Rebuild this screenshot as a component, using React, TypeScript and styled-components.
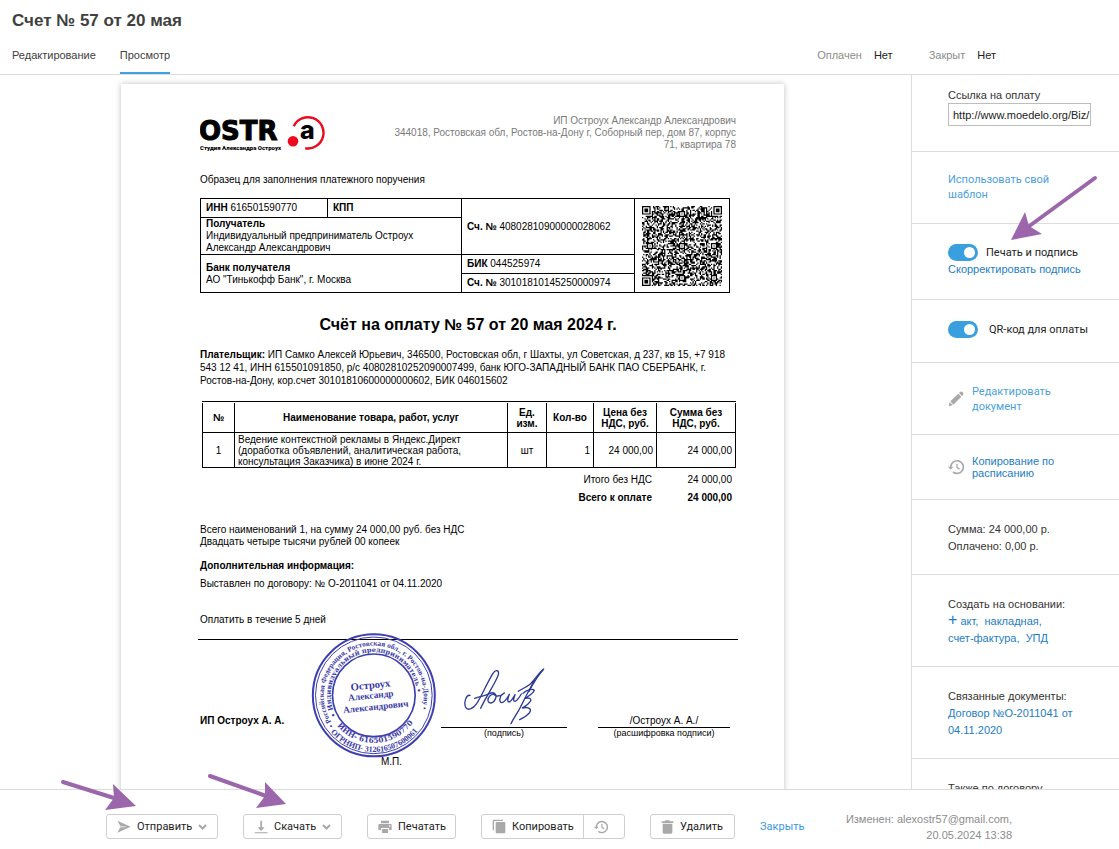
import React from "react";
import styled, { createGlobalStyle, css } from "styled-components";

const ARIAL = `"Liberation Sans", Arial, sans-serif`;
const ROBOTO = `Roboto, "Liberation Sans", sans-serif`;
const LINE = "#dcdcdc";
const ARROW = "#9b66ac";

const GlobalStyle = createGlobalStyle`
  *, *::before, *::after { box-sizing: border-box; }
  body {
    margin: 0;
    background: #fff;
    color: #333;
    font: 11px/17px ${ARIAL};
  }
  a { text-decoration: none; }
`;

/* ---------- page frame ---------- */

const Page = styled.div`
  display: flex;
  flex-direction: column;
  height: 100vh;
  overflow: hidden;
`;

const Header = styled.header`
  flex: none;
  border-bottom: 1px solid ${LINE};
`;

const PageTitle = styled.h1`
  margin: 0;
  padding: 10px 12px 0;
  font-size: 17px;
  line-height: 22px;
  color: #404040;
`;

const HeaderRow = styled.div`
  display: flex;
  justify-content: space-between;
  padding: 14px 123px 0 12px;
`;

const Tabs = styled.nav`
  display: flex;
  gap: 24px;
`;

const Tab = styled.a<{ $active?: boolean }>`
  height: 28px;
  line-height: 18px;
  color: #404040;
  border-bottom: 2px solid ${(p) => (p.$active ? "#3ea2df" : "transparent")};
`;

const Statuses = styled.dl`
  display: flex;
  gap: 36px;
  margin: 0;
`;

const Status = styled.div`
  display: flex;
  gap: 12px;
  line-height: 18px;
  dt { color: #8c8c8c; }
  dd { margin: 0; color: #222; }
`;

const Main = styled.main`
  display: flex;
  flex: 1;
  min-height: 0;
`;

const Preview = styled.section`
  flex: 1;
  min-width: 0;
  overflow: hidden;
  padding: 9px 6px 0 0;
`;

/* ---------- printed document ---------- */

const Paper = styled.article`
  width: 663px;
  margin: 0 auto;
  padding: 31px 48px 60px 79px;
  background: #fff;
  box-shadow: 0 0 6px rgba(0, 0, 0, 0.25);
  color: #000;
  font-size: 10px;
  line-height: 12px;
`;

const PaperHead = styled.div`
  display: flex;
  justify-content: space-between;
  align-items: flex-start;
  height: 36px;
  margin-bottom: 23px;
`;

const Address = styled.address`
  width: 350px;
  text-align: right;
  font-style: normal;
  color: #7a7a7a;
`;

const Para = styled.p<{ $top?: number; $bold?: boolean }>`
  margin: ${(p) => p.$top ?? 0}px 0 0;
  font-weight: ${(p) => (p.$bold ? 700 : 400)};
`;

const Payer = styled(Para)`
  line-height: 13px;
`;

const DocTitle = styled.h2`
  margin: 22px 0 0;
  text-align: center;
  font-size: 16px;
  line-height: 20px;
`;

const BankTable = styled.table`
  width: 530px;
  margin-top: 12px;
  border-collapse: collapse;
  table-layout: fixed;
  td {
    height: 19px;
    padding: 0 5px;
    border: 1px solid #000;
    vertical-align: middle;
  }
`;

const QrCell = styled.td`
  svg { display: block; margin: 0 auto; }
`;

const ItemsFrame = styled.div`
  margin: 14px 0 0 2px;
  padding-top: 1px;
  border-top: 1px solid #000;
`;

const ItemsTable = styled.table`
  width: 100%;
  border-spacing: 0;
  table-layout: fixed;
  line-height: 11px;
  thead th, tbody td {
    border-left: 1px solid #000;
    border-bottom: 1px solid #000;
  }
  thead th:last-child, tbody td:last-child { border-right: 1px solid #000; }
  th { height: 30px; padding: 0 2px; }
  tbody td { height: 35px; padding: 0 3px; }
  tfoot td { height: 18px; padding: 0 4px; text-align: right; }
  tfoot tr:first-child td { height: 20px; padding-top: 2px; }
  tfoot tr:last-child td { font-weight: 700; }
`;

const Cell = styled.td<{ $align: "left" | "center" | "right" }>`
  text-align: ${(p) => p.$align};
`;

const Rule = styled.hr`
  height: 1px;
  margin: 13px -2px 0;
  border: 0;
  background: #000;
`;

const SignRow = styled.div`
  position: relative;
  display: grid;
  grid-template-columns: 241px 126px 132px;
  align-items: end;
  padding-top: 25px;
  & > :last-child { margin-left: 31px; width: 132px; }
`;

const SignName = styled.div`
  padding-bottom: 11px;
  font-weight: 700;
`;

const SignField = styled.div`
  text-align: center;
`;

const SignLine = styled.div`
  border-bottom: 1px solid #000;
  svg { display: block; margin-left: 21px; }
`;

const SignCaption = styled.div`
  font-size: 9px;
  line-height: 10px;
`;

const Stamp = styled.svg`
  position: absolute;
  left: 110px;
  top: -7px;
`;

const SealMark = styled.p`
  margin: 18px 0 0 181px;
`;

/* ---------- sidebar ---------- */

const Sidebar = styled.aside`
  flex: none;
  width: 208px;
  overflow: hidden;
  border-left: 1px solid ${LINE};
`;

const Section = styled.section<{ $top?: number; $bottom?: number }>`
  position: relative;
  padding: ${(p) => p.$top ?? 20}px 20px ${(p) => p.$bottom ?? 20}px 36px;
  border-bottom: 1px solid ${LINE};
`;

const LinkField = styled.label`
  display: block;
  line-height: 15px;
  input {
    display: block;
    width: 143px;
    height: 23px;
    padding: 0 0 0 4px;
    border: 1px solid #bdbdbd;
    font: 11px/17px ${ARIAL};
    color: #222;
  }
`;

const SideLink = styled.a`
  color: #1d7dc2;
`;

const LightLink = styled.a`
  display: block;
  width: 110px;
  font: 11px/15px ${ROBOTO};
  color: #4a9fdc;
`;

const IconLink = styled.div<{ $tight?: boolean }>`
  display: flex;
  align-items: center;
  gap: 8px;
  svg { flex: none; }
  ${(p) => p.$tight && css`line-height: 12px;`}
`;

const Switch = styled.label<{ $gap: number }>`
  display: flex;
  align-items: center;
  gap: ${(p) => p.$gap}px;
  height: 17px;
  font-family: ${ROBOTO};
  color: #222;
  white-space: nowrap;
  input {
    appearance: none;
    flex: none;
    display: flex;
    align-items: center;
    width: 30px;
    height: 17px;
    margin: 0;
    padding: 0 3px;
    border-radius: 9px;
    background: #c4c4c4;
  }
  input::before {
    content: "";
    width: 11px;
    height: 11px;
    border-radius: 50%;
    background: #fff;
  }
  input:checked {
    justify-content: flex-end;
    background: #3a9fdf;
  }
`;

const Plus = styled.span`
  font-size: 16px;
  line-height: 12px;
`;

/* ---------- footer ---------- */

const Footer = styled.footer`
  flex: none;
  display: flex;
  align-items: flex-start;
  gap: 25px;
  height: 60px;
  padding: 24px 107px 0 106px;
  border-top: 1px solid ${LINE};
  background: #fff;
`;

const Anchor = styled.div`
  position: relative;
`;

const ButtonGroup = styled.div`
  display: flex;
  button + button {
    margin-left: -1px;
    border-radius: 0 3px 3px 0;
  }
  button:first-child { border-radius: 3px 0 0 3px; }
`;

const Button = styled.button<{ $width: number }>`
  display: flex;
  align-items: center;
  justify-content: flex-start;
  gap: 6px;
  width: ${(p) => p.$width}px;
  height: 25px;
  padding: 0 10px;
  border: 1px solid #cfcfcf;
  border-radius: 3px;
  background: #fff;
  font: 11px/17px ${ROBOTO};
  color: #222;
  white-space: nowrap;
  svg { flex: none; }
`;

const CloseLink = styled.a`
  font: 11px/25px ${ROBOTO};
  color: #3b97dd;
`;

const Changed = styled.div`
  margin: -3px 0 0 auto;
  text-align: right;
  line-height: 16px;
  color: #8c8c8c;
`;

const Pointer = styled.svg<{ $left: number; $top: number }>`
  position: absolute;
  left: ${(p) => p.$left}px;
  top: ${(p) => p.$top}px;
  overflow: visible;
  pointer-events: none;
  z-index: 2;
`;

/* ---------- drawings ---------- */

const Logo = () => (
  <svg width="126" height="37" viewBox="0 0 126 37" aria-label="OSTR.a">
    <text x="-1" y="25" fontFamily="DejaVu Sans" fontWeight="700" fontSize="26" stroke="#000" strokeWidth="1">OSTR</text>
    <text x="0" y="35" fontFamily="Roboto" fontWeight="900" fontSize="6">Студия Александра Остроух</text>
    <path d="M93.8 11.2A15.6 15.6 0 1 1 105.2 33.2" fill="none" stroke="#ec0a1e" strokeWidth="2.4" />
    <circle cx="93" cy="26.300" r="5.3" fill="#ec0a1e" />
    <text x="100" y="24" fontFamily="Inter" fontWeight="800" fontSize="25">a</text>
  </svg>
);

const QR_SIZE = 65;

function qrPath(): string {
  let seed = 20240520;
  const rnd = () => {
    seed = (seed * 1103515245 + 12345) % 2147483648;
    return seed / 2147483648;
  };
  const grid: boolean[][] = [];
  for (let y = 0; y < QR_SIZE; y++) {
    grid.push([]);
    for (let x = 0; x < QR_SIZE; x++) grid[y].push(rnd() > 0.48);
  }
  const put = (x: number, y: number, v: boolean) => {
    if (x >= 0 && y >= 0 && x < QR_SIZE && y < QR_SIZE) grid[y][x] = v;
  };
  const square = (cx: number, cy: number, r: number, light: number[]) => {
    for (let dy = -r; dy <= r; dy++)
      for (let dx = -r; dx <= r; dx++)
        put(cx + dx, cy + dy, !light.includes(Math.max(Math.abs(dx), Math.abs(dy))));
  };
  [6, 32, 58].forEach((x) => [6, 32, 58].forEach((y) => square(x, y, 2, [1])));
  [[3, 3], [61, 3], [3, 61]].forEach(([x, y]) => square(x, y, 4, [2, 4]));
  let d = "";
  grid.forEach((row, y) => row.forEach((on, x) => { if (on) d += `M${x} ${y}h1v1h-1z`; }));
  return d;
}

const QR_PATH = qrPath();

const QrCode = () => (
  <svg width="80" height="80" viewBox="0 0 65 65" aria-label="QR-код">
    <path d={QR_PATH} />
  </svg>
);

const StampDrawing = () => (
  <Stamp width="127" height="125" viewBox="30 25 380 375">
    <defs>
      <path id="ringOuter" d="M101 303A150 150 0 1 1 340 304" />
      <path id="ringInner" d="M108 274A129 129 0 1 1 342 255" />
      <path id="footOuter" d="M84 313A170 170 0 0 0 384 260" />
      <path id="footInner" d="M101 290A144 144 0 0 0 363 236" />
    </defs>
    <g fill="none" stroke="#3f3fae">
      <circle cx="221" cy="212" r="183" strokeWidth="6" />
      <circle cx="221" cy="212" r="175" strokeWidth="3" />
      <circle cx="221" cy="212" r="124" strokeWidth="5" />
    </g>
    <g fill="#3a3aa6" fontFamily="Liberation Serif" fontWeight="700">
      <text fontSize="22"><textPath href="#ringOuter">• Российская Федерация, Ростовская обл., г. Ростов-на-Дону •</textPath></text>
      <text fontSize="24"><textPath href="#footOuter" startOffset="12">ОГРНИП- 312616507600061</textPath></text>
      <text fontSize="20" fontFamily="DejaVu Serif"><textPath href="#ringInner">• Индивидуальный предприниматель •</textPath></text>
      <text fontSize="22" fontFamily="DejaVu Serif"><textPath href="#footInner" startOffset="16">ИНН- 616501590770</textPath></text>
      <g textAnchor="middle" transform="rotate(-6 221 212)">
        <text x="214" y="191" fontSize="32">Остроух</text>
        <text x="212" y="221" fontSize="28">Александр</text>
        <text x="223" y="256" fontSize="28">Александрович</text>
      </g>
    </g>
  </Stamp>
);

const Signature = () => (
  <svg width="85" height="62" viewBox="95 105 255 186" fill="none" stroke="#2d3a94" strokeWidth="4" strokeLinecap="round" strokeLinejoin="round">
    <path d="M119 196C108 194 100 215 105 230C111 244 128 237 139 221C154 198 172 155 188 130C196 118 208 120 204 134C196 160 166 200 151 235" />
    <path d="M133 205C148 199 165 198 178 191C190 184 200 193 196 205C191 220 176 224 173 212C172 200 184 190 192 194C204 204 214 196 222 189C208 196 204 216 214 218C224 218 232 202 237 193C232 206 230 215 236 216C243 215 250 200 254 194C249 207 248 214 254 214C262 212 268 200 273 192" />
    <path d="M340 117C325 128 318 145 300 162C288 172 272 178 264 184M313 150C296 180 280 212 270 232C262 250 250 262 242 281" />
    <path d="M278 190C292 178 308 176 312 181C308 192 292 200 284 205C298 202 305 206 300 214C292 226 282 230 276 234C290 230 302 234 300 243C296 256 280 262 268 269" />
    <path d="M339 119C324 136 312 154 296 184" />
  </svg>
);

const SendIcon = () => (
  <svg width="14" height="13" viewBox="0 0 42 39" fill="#a9a9a9"><path d="M1 2L41 20L1 38L10 22L28 20L10 18Z" /><path d="M9 17L27 19V21L9 23Z" fill="#d8d8d8" /></svg>
);
const DownloadIcon = () => (
  <svg width="14" height="14" viewBox="0 0 42 42" fill="#a9a9a9"><path d="M19 2h5v20h8L21.500 33L11 22h8zM2 37h39v3H2z" /></svg>
);
const PrintIcon = () => (
  <svg width="14" height="14" viewBox="0 0 42 42" fill="#a9a9a9"><path d="M9 2h24v8H9zM4 12h34a3 3 0 0 1 3 3v15h-8v-6H9v6H1V15a3 3 0 0 1 3-3zm29 4v4h4v-4zM12 27h18v12H12z" /></svg>
);
const CopyIcon = () => (
  <svg width="14" height="15" viewBox="0 0 42 45" fill="#a9a9a9"><rect x="11" y="9" width="29" height="34" rx="3" /><path d="M2 34V6a4 4 0 0 1 4-4h27v4H8a2 2 0 0 0-2 2v26z" /></svg>
);
const TrashIcon = () => (
  <svg width="13" height="14" viewBox="0 0 39 42" fill="#a9a9a9"><path d="M13 1h12l2 3h10v5H2V4h9zM5 11h29v26a4 4 0 0 1-4 4H9a4 4 0 0 1-4-4z" /></svg>
);
const HistoryIcon = ({ size = 14 }: { size?: number }) => (
  <svg width={size} height={size} viewBox="0 0 48 48" fill="none" stroke="#a9a9a9" strokeWidth="5">
    <path d="M8 24A19 19 0 1 1 15 39" /><path d="M27 14v11l8 6" strokeWidth="4" /><path d="M0 23h16l-8 9z" fill="#a9a9a9" stroke="none" />
  </svg>
);
const PencilIcon = () => (
  <svg width="16" height="16" viewBox="0 0 48 48" fill="#a9a9a9"><path d="M2 46l3-13 9 10zM7 31L31 8l9 9-24 24zM33 6l3-3a5 5 0 0 1 7 0l2 2a5 5 0 0 1 0 7l-3 3z" /></svg>
);
const Chevron = () => (
  <svg width="9" height="6" viewBox="0 0 9 6" fill="none" stroke="#a9a9a9" strokeWidth="2"><path d="M1 1l3.500 3.500L8 1" /></svg>
);

/* ---------- app ---------- */

export default function App() {
  return (
    <Page>
      <GlobalStyle />
      <Header>
        <PageTitle>Счет № 57 от 20 мая</PageTitle>
        <HeaderRow>
          <Tabs>
            <Tab href="#edit">Редактирование</Tab>
            <Tab href="#view" $active>Просмотр</Tab>
          </Tabs>
          <Statuses>
            <Status><dt>Оплачен</dt><dd>Нет</dd></Status>
            <Status><dt>Закрыт</dt><dd>Нет</dd></Status>
          </Statuses>
        </HeaderRow>
      </Header>

      <Main>
        <Preview>
          <Paper>
            <PaperHead>
              <Logo />
              <Address>
                ИП Остроух Александр Александрович<br />
                344018, Ростовская обл, Ростов-на-Дону г, Соборный пер, дом 87, корпус<br />
                71, квартира 78
              </Address>
            </PaperHead>
            <Para>Образец для заполнения платежного поручения</Para>
            <BankTable>
              <colgroup>
                <col style={{ width: 127 }} /><col style={{ width: 134 }} /><col style={{ width: 173 }} /><col />
              </colgroup>
              <tbody>
                <tr>
                  <td><b>ИНН</b> 616501590770</td>
                  <td><b>КПП</b></td>
                  <td rowSpan={2}><b>Сч. №</b> 40802810900000028062</td>
                  <QrCell rowSpan={4}><QrCode /></QrCell>
                </tr>
                <tr>
                  <td colSpan={2}><b>Получатель</b><br />Индивидуальный предприниматель Остроух<br />Александр Александрович</td>
                </tr>
                <tr>
                  <td colSpan={2} rowSpan={2}><b>Банк получателя</b><br />АО "Тинькофф Банк", г. Москва</td>
                  <td><b>БИК</b> 044525974</td>
                </tr>
                <tr><td><b>Сч. №</b> 30101810145250000974</td></tr>
              </tbody>
            </BankTable>

            <DocTitle>Счёт на оплату № 57 от 20 мая 2024 г.</DocTitle>
            <Payer $top={13}>
              <b>Плательщик:</b> ИП Самко Алексей Юрьевич, 346500, Ростовская обл, г Шахты, ул Советская, д 237, кв 15, +7 918<br />
              543 12 41, ИНН 615501091850, р/с 40802810252090007499, банк ЮГО-ЗАПАДНЫЙ БАНК ПАО СБЕРБАНК, г.<br />
              Ростов-на-Дону, кор.счет 30101810600000000602, БИК 046015602
            </Payer>

            <ItemsFrame>
              <ItemsTable>
                <colgroup>
                  <col style={{ width: 32 }} /><col /><col style={{ width: 39 }} /><col style={{ width: 47 }} /><col style={{ width: 63 }} /><col style={{ width: 80 }} />
                </colgroup>
                <thead>
                  <tr>
                    <th>№</th><th>Наименование товара, работ, услуг</th><th>Ед.<br />изм.</th><th>Кол-во</th>
                    <th>Цена без<br />НДС, руб.</th><th>Сумма без<br />НДС, руб.</th>
                  </tr>
                </thead>
                <tbody>
                  <tr>
                    <Cell $align="center">1</Cell>
                    <Cell $align="left">Ведение контекстной рекламы в Яндекс.Директ<br />(доработка объявлений, аналитическая работа,<br />консультация Заказчика) в июне 2024 г.</Cell>
                    <Cell $align="center">шт</Cell>
                    <Cell $align="right">1</Cell>
                    <Cell $align="right">24 000,00</Cell>
                    <Cell $align="right">24 000,00</Cell>
                  </tr>
                </tbody>
                <tfoot>
                  <tr><td colSpan={5}>Итого без НДС</td><td>24 000,00</td></tr>
                  <tr><td colSpan={5}>Всего к оплате</td><td>24 000,00</td></tr>
                </tfoot>
              </ItemsTable>
            </ItemsFrame>

            <Para $top={18}>Всего наименований 1, на сумму 24 000,00 руб. без НДС<br />Двадцать четыре тысячи рублей 00 копеек</Para>
            <Para $top={12} $bold>Дополнительная информация:</Para>
            <Para $top={6}>Выставлен по договору: № О-2011041 от 04.11.2020</Para>
            <Para $top={24}>Оплатить в течение 5 дней</Para>
            <Rule />
            <SignRow>
              <SignName>ИП Остроух А. А.</SignName>
              <StampDrawing />
              <SignField>
                <SignLine><Signature /></SignLine>
                <SignCaption>(подпись)</SignCaption>
              </SignField>
              <SignField>
                <SignLine>/Остроух А. А./</SignLine>
                <SignCaption>(расшифровка подписи)</SignCaption>
              </SignField>
            </SignRow>
            <SealMark>М.П.</SealMark>
          </Paper>
        </Preview>

        <Sidebar>
          <Section $top={13} $bottom={25}>
            <LinkField>Ссылка на оплату<input type="text" readOnly value="http://www.moedelo.org/Biz/" /></LinkField>
          </Section>
          <Section $bottom={21}>
            <LightLink href="#template">Использовать свой шаблон</LightLink>
          </Section>
          <Section $bottom={21}>
            <Switch $gap={8}><input type="checkbox" defaultChecked />Печать и подпись</Switch>
            <SideLink href="#adjust">Скорректировать подпись</SideLink>
            <Pointer $left={99} $top={-48} width="86" height="66" viewBox="1011 176 86 66">
              <path d="M1095 178L1028 227" stroke={ARROW} strokeWidth="4" strokeLinecap="round" />
              <path d="M1011 240L1025 212L1029 226L1042 234Z" fill={ARROW} />
            </Pointer>
          </Section>
          <Section $top={21} $bottom={24}>
            <Switch $gap={11}><input type="checkbox" defaultChecked />QR-код для оплаты</Switch>
          </Section>
          <Section $top={21}>
            <IconLink><PencilIcon /><LightLink href="#document">Редактировать документ</LightLink></IconLink>
          </Section>
          <Section>
            <IconLink $tight><HistoryIcon size={16} /><SideLink href="#schedule">Копирование по расписанию</SideLink></IconLink>
          </Section>
          <Section $top={21} $bottom={19}>Сумма: 24 000,00 р.<br />Оплачено: 0,00 р.</Section>
          <Section $top={21} $bottom={19}>
            Создать на основании:<br />
            <SideLink href="#act"><Plus>+</Plus> акт,</SideLink>&nbsp; <SideLink href="#waybill">накладная,</SideLink><br />
            <SideLink href="#invoice">счет-фактура,</SideLink>&nbsp; <SideLink href="#upd">УПД</SideLink>
          </Section>
          <Section $top={21} $bottom={19}>
            Связанные документы:<br />
            <SideLink href="#contract">Договор №О-2011041 от<br />04.11.2020</SideLink>
          </Section>
          <Section $top={21}>Также по договору</Section>
        </Sidebar>
      </Main>

      <Footer>
        <Anchor>
          <Button $width={112}><SendIcon />Отправить<Chevron /></Button>
          <Pointer $left={-45} $top={-35} width="76" height="34" viewBox="61 779 76 34">
            <path d="M63 782L114 798" stroke={ARROW} strokeWidth="4" strokeLinecap="round" />
            <path d="M136 806L113 784L114 798L105 810Z" fill={ARROW} />
          </Pointer>
        </Anchor>
        <Anchor>
          <Button $width={99}><DownloadIcon />Скачать<Chevron /></Button>
          <Pointer $left={-35} $top={-40} width="80" height="36" viewBox="208 774 80 36">
            <path d="M210 776L266 796" stroke={ARROW} strokeWidth="4" strokeLinecap="round" />
            <path d="M286 804L265 782L265 796L256 808Z" fill={ARROW} />
          </Pointer>
        </Anchor>
        <Button $width={89}><PrintIcon />Печатать</Button>
        <ButtonGroup>
          <Button $width={103}><CopyIcon />Копировать</Button>
          <Button $width={42} aria-label="История"><HistoryIcon /></Button>
        </ButtonGroup>
        <Button $width={85}><TrashIcon />Удалить</Button>
        <CloseLink href="#close">Закрыть</CloseLink>
        <Changed>Изменен: alexostr57@gmail.com,<br />20.05.2024 13:38</Changed>
      </Footer>
    </Page>
  );
}
